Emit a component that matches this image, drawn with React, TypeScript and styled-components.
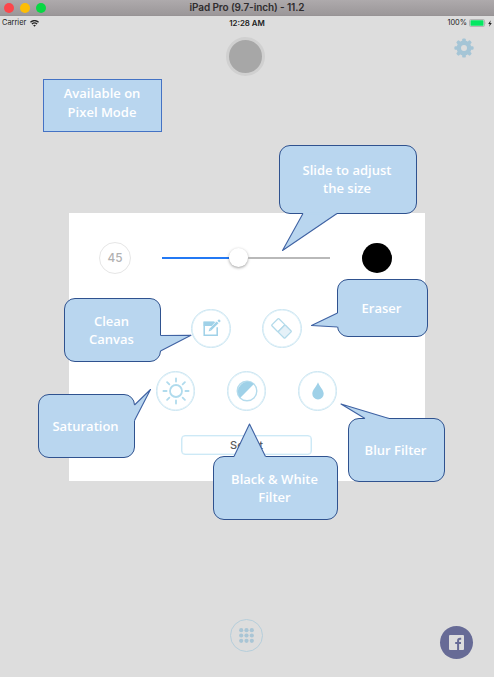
import React from 'react';
import styled, { createGlobalStyle } from 'styled-components';

const GlobalStyle = createGlobalStyle`
  * { box-sizing: border-box; }
  body { margin: 0; background: #dddddd; font-family: Inter, "Liberation Sans", sans-serif; }
`;

const Simulator = styled.div`
  position: relative;
  width: 494px;
  height: 677px;
  overflow: hidden;
  display: flex;
  flex-direction: column;
  background: #dddddd;
`;

const TitleBar = styled.header`
  height: 16px;
  flex: none;
  display: grid;
  grid-template-columns: 1fr auto 1fr;
  align-items: center;
  background: linear-gradient(#aeaaac, #9b9799);
  border-bottom: 1px solid #979395;
`;

const WindowDots = styled.div`
  display: flex;
  gap: 6px;
  padding-left: 4px;
`;

const Dot = styled.span<{ $color: string }>`
  width: 10px;
  height: 10px;
  border-radius: 50%;
  background: ${p => p.$color};
`;

const Title = styled.h1`
  margin: 0;
  font-size: 10px;
  line-height: 15px;
  font-weight: 600;
  letter-spacing: -0.1px;
  white-space: nowrap;
  color: #2f2c2e;
`;

const StatusBar = styled.div`
  height: 14px;
  flex: none;
  display: grid;
  grid-template-columns: 1fr auto 1fr;
  align-items: center;
  padding: 0 2px;
  font-size: 7.4px;
  line-height: 14px;
  color: #222;
`;

const StatusGroup = styled.div<{ $end?: boolean }>`
  display: flex;
  align-items: center;
  gap: ${p => (p.$end ? 2 : 4)}px;
  justify-content: ${p => (p.$end ? 'flex-end' : 'flex-start')};
`;

const Time = styled.span`
  font-weight: 600;
  font-size: 7.9px;
`;

const TopRow = styled.div`
  flex: none;
  height: 182.5px;
  display: grid;
  grid-template-columns: 1fr 40px 1fr;
  align-items: start;
  padding: 6.5px 20px 0 18px;
`;

const ColorWell = styled.div`
  grid-column: 2;
  width: 39px;
  height: 39px;
  border-radius: 50%;
  background: #a7a7a7;
  border: 3px solid #d0d0d0;
`;

const GearSlot = styled.div`
  display: flex;
  justify-content: flex-end;
  padding-top: 1px;
  height: 21px;
`;

const Panel = styled.section`
  flex: none;
  width: 356px;
  height: 268.5px;
  margin-left: 68.5px;
  padding-top: 29px;
  background: #fff;
  display: flex;
  flex-direction: column;
`;

const SliderRow = styled.div`
  display: flex;
  align-items: center;
  height: 32px;
  padding: 0 32.5px 0 30.5px;
`;

const SizeValue = styled.div`
  width: 32px;
  height: 32px;
  border: 1px solid #e6e6e6;
  border-radius: 50%;
  display: flex;
  align-items: center;
  justify-content: center;
  font-size: 11.8px;
  font-weight: 500;
  color: #b1b1b1;
`;

const Track = styled.div`
  width: 168px;
  margin-left: 31px;
  display: flex;
  align-items: center;
`;

const Filled = styled.div`
  width: 66.5px;
  height: 2px;
  background: #2379f4;
`;

const Knob = styled.div`
  width: 19px;
  height: 19px;
  border-radius: 50%;
  background: #fff;
  box-shadow: 0 1px 3px rgba(0, 0, 0, 0.38);
`;

const Rest = styled.div`
  flex: 1;
  height: 2px;
  background: #b9b9b9;
`;

const BrushColor = styled.div`
  width: 30px;
  height: 30px;
  margin-left: auto;
  border-radius: 50%;
  background: #000;
`;

const ToolRow = styled.div<{ $top: number }>`
  display: flex;
  justify-content: center;
  gap: 31.5px;
  margin-top: ${p => p.$top}px;
`;

const ToolButton = styled.button`
  width: 39.5px;
  height: 39.5px;
  padding: 0;
  border: 1px solid #cbe6f2;
  border-radius: 50%;
  background: #fff;
  box-shadow: inset 0 0 0 0.6px #d6ecf6;
  display: flex;
  align-items: center;
  justify-content: center;
`;

const SelectButton = styled.button`
  align-self: center;
  width: 131px;
  height: 20.5px;
  margin-top: 24px;
  padding: 0;
  border: 1px solid #cde9f6;
  border-radius: 4px;
  background: #fff;
  box-shadow: inset 0 0 0 0.6px #d9eff9;
  color: #5c5c5c;
  font: 500 11px Inter, sans-serif;
`;

const BottomRow = styled.footer`
  flex: none;
  display: grid;
  grid-template-columns: 1fr 33px 1fr;
  padding: 138px 21px 0 19px;
`;

const GridButton = styled.button`
  grid-column: 2;
  width: 33px;
  height: 33px;
  padding: 0;
  border: 1px solid #b5cedb;
  border-radius: 50%;
  background: transparent;
  display: flex;
  align-items: center;
  justify-content: center;
`;

const FacebookButton = styled.button`
  justify-self: end;
  width: 33px;
  height: 33px;
  margin-top: 6.5px;
  padding: 0;
  border: 0;
  border-radius: 50%;
  background: #676b96;
  display: flex;
  align-items: center;
  justify-content: center;
`;

/* Help annotations float over the app screen. */
const Bubble = styled.aside<{ $x: number; $y: number; $w: number; $h: number; $note?: boolean }>`
  position: absolute;
  left: ${p => p.$x}px;
  top: ${p => p.$y}px;
  width: ${p => p.$w}px;
  height: ${p => p.$h}px;
  padding-bottom: ${p => (p.$note ? 6 : 1)}px;
  padding-right: ${p => (p.$note ? 1 : 2)}px;
  border: 1px solid ${p => (p.$note ? '#4472c4' : '#2f528f')};
  border-radius: ${p => (p.$note ? 0 : 11)}px;
  background: #b9d6ef;
  display: flex;
  align-items: center;
  justify-content: center;
`;

const BubbleText = styled.p<{ $leading: number }>`
  margin: 0;
  color: #fff;
  font-family: "Open Sans", "Noto Sans", sans-serif;
  font-weight: 600;
  font-size: 13px;
  line-height: ${p => p.$leading}px;
  text-align: center;
  white-space: pre;
`;

const Tail = styled.svg`
  position: absolute;
  left: -1px;
  top: -1px;
  overflow: visible;
`;

type CalloutProps = { x: number; y: number; w: number; h: number; tail?: string; text: string };

function Callout({ x, y, w, h, tail, text }: CalloutProps) {
  const points = tail ? tail.split(' ').map(p => p.split(',')) : [];
  return (
    <Bubble $x={x} $y={y} $w={w} $h={h} $note={!tail}>
      {tail && (
        <Tail width={w} height={h}>
          <polygon points={tail} fill="#b9d6ef" />
          <line x1={points[0][0]} y1={points[0][1]} x2={points[2][0]} y2={points[2][1]} stroke="#b9d6ef" strokeWidth="1.6" />
          <polyline points={tail} fill="none" stroke="#3f62a3" strokeWidth="1.1" strokeLinejoin="round" />
        </Tail>
      )}
      <BubbleText $leading={tail ? 18 : 19}>{text}</BubbleText>
    </Bubble>
  );
}

const callouts: CalloutProps[] = [
  { x: 43, y: 79, w: 119, h: 53, text: 'Available on\nPixel Mode' },
  { x: 279, y: 145, w: 138, h: 69, tail: '24,68.5 3.5,105.5 58,68.5', text: 'Slide to adjust\nthe size' },
  { x: 337, y: 279, w: 91, h: 58, tail: '0.5,34 -25.5,46.5 0.5,48', text: 'Eraser' },
  { x: 64, y: 298, w: 97, h: 64, tail: '96.5,37.5 127,37.2 96.5,53', text: 'Clean\nCanvas' },
  { x: 38, y: 394, w: 97, h: 64, tail: '96.5,11 112.5,-4.5 96.5,26.5', text: 'Saturation' },
  { x: 213, y: 456, w: 125, h: 64, tail: '21,0.5 36.5,-32 52.5,0.5', text: 'Black & White\nFilter' },
  { x: 348, y: 418, w: 97, h: 64, tail: '17,0.5 -7,-14 41,0.5', text: 'Blur Filter' },
];

const blue = '#9fd1e8';
const rays = [0, 45, 90, 135, 180, 225, 270, 315];

export default function App() {
  return (
    <>
      <GlobalStyle />
      <Simulator>
        <TitleBar>
          <WindowDots>
            <Dot $color="#fc464b" />
            <Dot $color="#fdbd04" />
            <Dot $color="#07d843" />
          </WindowDots>
          <Title>iPad Pro (9.7-inch) - 11.2</Title>
        </TitleBar>
        <StatusBar>
          <StatusGroup>
            Carrier
            <svg width="9" height="7" viewBox="0 0 9 7">
              <path d="M.4 2.3C2.8.3 6.2.3 8.6 2.3M1.9 4C3.4 2.7 5.6 2.7 7.1 4" fill="none" stroke="#222" strokeWidth="1.3" />
              <path d="M3.1 5.2Q4.5 4.2 5.9 5.2L4.5 6.8Z" fill="#222" />
            </svg>
          </StatusGroup>
          <Time>12:28 AM</Time>
          <StatusGroup $end>
            100%
            <svg width="17" height="8" viewBox="0 0 17 8">
              <rect x=".5" y=".5" width="15" height="7" rx="1.2" fill="#dddddd" stroke="#aaa" strokeWidth=".8" />
              <rect x="1.5" y="1.2" width="13" height="5.6" rx=".6" fill="#04e762" />
              <path d="M16.2 2.8Q17 4 16.2 5.2Z" fill="#999" />
            </svg>
            <svg width="4" height="7" viewBox="0 0 4 7">
              <path d="M2.7.3L.2 3.9H1.8L1.1 6.7 3.8 2.9H2.2Z" fill="#222" />
            </svg>
          </StatusGroup>
        </StatusBar>

        <TopRow>
          <ColorWell />
          <GearSlot>
            <svg width="20" height="20" viewBox="-10 -10 20 20">
              {rays.map(a => (
                <rect key={a} x="-1.8" y="-9.6" width="3.6" height="5" rx="1.2" fill="#a5c5d6" transform={`rotate(${a})`} />
              ))}
              <circle r="5.2" fill="none" stroke="#a5c5d6" strokeWidth="4.4" />
            </svg>
          </GearSlot>
        </TopRow>

        <Panel>
          <SliderRow>
            <SizeValue>45</SizeValue>
            <Track>
              <Filled />
              <Knob />
              <Rest />
            </Track>
            <BrushColor />
          </SliderRow>

          <ToolRow $top={35}>
            <ToolButton aria-label="Clean canvas">
              <svg width="20" height="20" viewBox="0 0 20 20" fill="none">
                <path d="M13 4.3H3.2V17.3H16.2V9.2" stroke={blue} strokeWidth="1.5" />
                <path d="M2.6 3.7H14.6L10.7 7.9H2.6Z" fill={blue} />
                <path d="M9.3 11.7L16.6 4.4" stroke={blue} strokeWidth="2.5" />
                <path d="M17.3 3.7L18.9 2.1" stroke={blue} strokeWidth="2.5" />
                <path d="M8.4 10.8L10.2 12.6 7.6 13.4Z" fill={blue} />
              </svg>
            </ToolButton>
            <ToolButton aria-label="Eraser">
              <svg width="22" height="22" viewBox="-11 -11 22 22">
                <g transform="translate(-.5 .4) rotate(45)" stroke="#b3daea" strokeWidth="1.3">
                  <rect x="-9.3" y="-5" width="9.3" height="10" rx="1" fill="#fff" />
                  <rect x="0" y="-5" width="9.3" height="10" rx="1" fill="#e5f1f8" />
                </g>
              </svg>
            </ToolButton>
          </ToolRow>

          <ToolRow $top={23.3}>
            <ToolButton aria-label="Saturation">
              <svg width="28" height="28" viewBox="-14 -14 28 28" fill="none" stroke="#b0dbed" strokeWidth="1.8" strokeLinecap="round">
                <circle r="6" />
                {rays.map(a => (
                  <path key={a} d="M0-9.4V-12.6" transform={`rotate(${a})`} />
                ))}
              </svg>
            </ToolButton>
            <ToolButton aria-label="Black and white filter">
              <svg width="22" height="22" viewBox="-11 -11 22 22">
                <circle r="9.8" fill="#fff" stroke="#b5dced" strokeWidth="1.4" />
                <path d="M-6.9 6.9A9.8 9.8 0 0 1 6.9-6.9Z" fill={blue} />
              </svg>
            </ToolButton>
            <ToolButton aria-label="Blur filter">
              <svg width="12" height="18" viewBox="0 0 12 18">
                <path d="M6 .3C5 3.8.3 8 .3 11.7A5.7 5.7 0 0 0 11.7 11.7C11.7 8 7 3.8 6 .3Z" fill={blue} />
              </svg>
            </ToolButton>
          </ToolRow>

          <SelectButton>Select</SelectButton>
        </Panel>

        <BottomRow>
          <GridButton aria-label="Menu">
            <svg width="15" height="15" viewBox="0 0 15 15" fill="#a9c5d5">
              {[2.2, 7.5, 12.8].flatMap(cy => [2.2, 7.5, 12.8].map(cx => <circle key={`${cx}-${cy}`} cx={cx} cy={cy} r="2.1" />))}
            </svg>
          </GridButton>
          <FacebookButton aria-label="Facebook">
            <svg width="15" height="15" viewBox="0 0 15 15">
              <rect width="15" height="15" rx="1" fill="#dddddd" />
              <path d="M9.1 15V8.9M6.2 8.1H12M12.2 3.7H11Q9.1 3.7 9.1 5.7V9" fill="none" stroke="#676b96" strokeWidth="2" />
            </svg>
          </FacebookButton>
        </BottomRow>

        {callouts.map(c => (
          <Callout key={c.text} {...c} />
        ))}
      </Simulator>
    </>
  );
}
